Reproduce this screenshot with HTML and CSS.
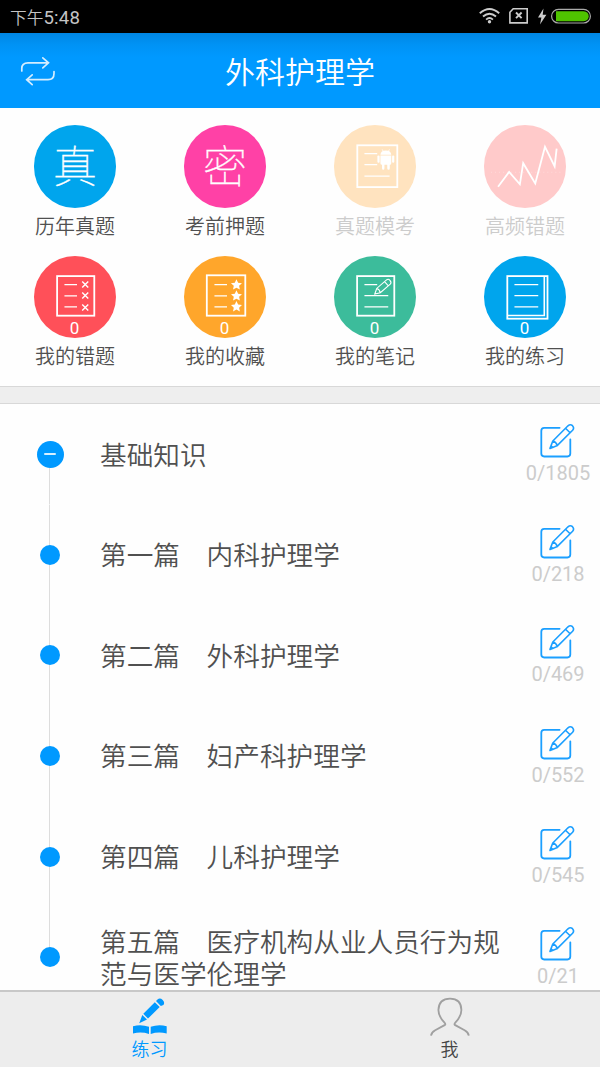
FILE: index.html
```
<!DOCTYPE html>
<html lang="zh-CN">
<head>
<meta charset="utf-8">
<title>外科护理学</title>
<link rel="stylesheet" href="styles.css">
</head>
<body>
<svg class="defs" width="0" height="0">
  <symbol id="edit" viewBox="0 0 36 36">
    <path d="M19.6 4.8H4.2Q1.3 4.8 1.3 7.7V30.6Q1.3 33.5 4.2 33.5H27.4Q30.3 33.5 30.3 30.6V16.3"/>
    <path d="M10 25.4L12.8 18L28 2.8Q30.3.7 32.5 2.7Q34.6 5 32.6 7.3L17.4 22.4ZM12.8 18Q15.8 18.7 17.4 22.4M25.5 5.3L30.1 9.8M11 22.8L12.8 24.4" stroke-width="1.6"/>
  </symbol>
  <symbol id="star" viewBox="-5 -5 10 10">
    <path d="M0-4.9L1.5-1.7L5-1.3L2.4 1.1L3.1 4.5L0 2.8L-3.1 4.5L-2.4 1.1L-5-1.3L-1.5-1.7Z"/>
  </symbol>
</svg>
<div class="screen">
  <div class="status">
    <span class="time">下午<span class="clock">5:48</span></span>
    <svg class="status-icons" viewBox="0 0 116 24" width="116" height="24">
      <g fill="none" stroke="#ccc" stroke-width="1.9">
        <path d="M.8 9.2Q10.5.6 20.2 9.2M4 12.5Q10.5 6.9 17 12.5M7.1 15.6Q10.5 12.6 13.9 15.6"/>
        <path d="M34.2 4.8H48.2V18.9H30.9V8.2Z" stroke-width="1.6"/>
        <path d="M37 8.5L42.6 14.2M42.6 8.5L37 14.2"/>
      </g>
      <circle cx="10.5" cy="17.8" r="1.7" fill="#ccc"/>
      <path d="M64.5 4.5L59 13.4H62.4L61 20.5L67.4 10.8H63.7Z" fill="#ccc"/>
      <rect x="72.6" y="5.4" width="38.8" height="13.6" rx="6.8" fill="none" stroke="#aaa" stroke-width="1.2"/>
      <path d="M77 7.2H104.5Q109.7 7.5 109.7 12.2Q109.7 16.9 104.5 17.2H77Z" fill="#4fc300"/>
    </svg>
  </div>
  <header class="header">
    <svg class="swap" viewBox="0 0 36 32" width="36" height="32">
      <path d="M1.8 15V12.5Q1.8 6.8 8 6.8H28.5M22.8 1.8L28.5 6.8L22.8 11.9M34 15.5V17.5Q34 23.7 28 23.7H7M12.2 18.8L6.7 23.7L12.2 28.7"/>
    </svg>
    <h1 class="title">外科护理学</h1>
  </header>

  <section class="grid">
    <div class="tile">
      <div class="disc blue"><span class="glyph">真</span></div>
      <span class="label">历年真题</span>
    </div>
    <div class="tile">
      <div class="disc pink"><span class="glyph">密</span></div>
      <span class="label">考前押题</span>
    </div>
    <div class="tile off">
      <div class="disc cream">
        <svg class="art" viewBox="0 0 82 82">
          <rect x="23.2" y="20.2" width="39.8" height="41.6"/>
          <path d="M30.3 28.5H43M30.3 39.5H43M30.3 50.8H55.3" stroke-width="1.3"/>
          <g fill="#fff" stroke="none">
            <path d="M46.2 29.6Q46.5 25.3 51.6 25.3Q56.7 25.3 57 29.6ZM46.2 30.3H57V38Q57 39.5 55.5 39.5V43Q55.5 44.5 54.3 44.5T53 43V39.5H50.2V43Q50.2 44.5 49 44.5T47.8 43V39.5Q46.2 39.5 46.2 38Z"/>
            <rect x="43.2" y="30.3" width="2.2" height="7.2" rx="1"/>
            <rect x="57.8" y="30.3" width="2.2" height="7.2" rx="1"/>
          </g>
          <path d="M48 24.3L49.2 26.5M55.2 24.3L54 26.5" stroke-width=".8"/>
        </svg>
      </div>
      <span class="label">真题模考</span>
    </div>
    <div class="tile off">
      <div class="disc rose">
        <svg class="art" viewBox="0 0 82 82">
          <path d="M7 47H76" stroke-width="1" stroke-dasharray="1 3" opacity=".3"/>
          <path d="M14 61.5L25 46.8L35.7 59L39 38L51 58.2L60.7 21.7L70.3 41.2L72.3 23.5"/>
        </svg>
      </div>
      <span class="label">高频错题</span>
    </div>
    <div class="tile">
      <div class="disc red">
        <svg class="art" viewBox="0 0 82 82">
          <rect x="23" y="20" width="37" height="39.4"/>
          <path d="M30.3 28.4H42.8M30.3 39.7H42.8M30.3 50.7H42.8" stroke-width="1.3"/>
          <path d="M48 25.4L54 31.4M54 25.4L48 31.4M48 36.4L54 42.4M54 36.4L48 42.4M48 48.2L54 54.2M54 48.2L48 54.2" stroke-width="1.4"/>
        </svg>
        <span class="num">0</span>
      </div>
      <span class="label">我的错题</span>
    </div>
    <div class="tile">
      <div class="disc orange">
        <svg class="art" viewBox="0 0 82 82">
          <rect x="22.7" y="19.2" width="38.3" height="40.2"/>
          <path d="M30.3 28.4H42.8M30.3 39.7H42.8M30.3 50.7H42.8" stroke-width="1.3"/>
          <g fill="#fff" stroke="none">
            <use href="#star" x="46.7" y="23" width="11" height="11"/>
            <use href="#star" x="46.7" y="33.9" width="11" height="11"/>
            <use href="#star" x="46.7" y="44.7" width="11" height="11"/>
          </g>
        </svg>
        <span class="num">0</span>
      </div>
      <span class="label">我的收藏</span>
    </div>
    <div class="tile">
      <div class="disc green">
        <svg class="art" viewBox="0 0 82 82">
          <rect x="23" y="20" width="37" height="39.4"/>
          <path d="M30.3 28.4H43M30.3 39.5H54M30.3 50.7H54" stroke-width="1.3"/>
          <path class="note-pen" d="M40.6 37.8L42.5 32.3L52.3 23.8Q54 22.3 55.7 24.2Q57.6 26.4 56 28L46.1 36.6ZM42.5 32.3Q45.3 33 46.1 36.6M50.3 25.5L54.1 29.7"/>
        </svg>
        <span class="num">0</span>
      </div>
      <span class="label">我的笔记</span>
    </div>
    <div class="tile">
      <div class="disc blue">
        <svg class="art" viewBox="0 0 82 82">
          <rect x="23.2" y="20" width="40" height="42.4"/>
          <path d="M60 20V59.2H23.2" stroke-width="1.6"/>
          <path d="M30.3 28.4H54M30.3 39.5H54M30.3 50.7H54" stroke-width="1.3"/>
        </svg>
        <span class="num">0</span>
      </div>
      <span class="label">我的练习</span>
    </div>
  </section>

  <div class="gap"></div>

  <main class="list">
    <div class="row first"><div class="rail"><span class="dot minus"></span></div><span class="name">基础知识</span><div class="stat"><svg class="edit"><use href="#edit"/></svg><span class="count">0/1805</span></div></div>
    <div class="row"><div class="rail"><span class="dot"></span></div><span class="name">第一篇　内科护理学</span><div class="stat"><svg class="edit"><use href="#edit"/></svg><span class="count">0/218</span></div></div>
    <div class="row"><div class="rail"><span class="dot"></span></div><span class="name">第二篇　外科护理学</span><div class="stat"><svg class="edit"><use href="#edit"/></svg><span class="count">0/469</span></div></div>
    <div class="row"><div class="rail"><span class="dot"></span></div><span class="name">第三篇　妇产科护理学</span><div class="stat"><svg class="edit"><use href="#edit"/></svg><span class="count">0/552</span></div></div>
    <div class="row"><div class="rail"><span class="dot"></span></div><span class="name">第四篇　儿科护理学</span><div class="stat"><svg class="edit"><use href="#edit"/></svg><span class="count">0/545</span></div></div>
    <div class="row last"><div class="rail"><span class="dot"></span></div><span class="name">第五篇　医疗机构从业人员行为规范与医学伦理学</span><div class="stat"><svg class="edit"><use href="#edit"/></svg><span class="count">0/21</span></div></div>
  </main>

  <nav class="nav">
    <div class="tab active">
      <svg viewBox="0 0 40 40" width="40" height="40">
        <g fill="#0099ff">
          <path d="M9.2 31.3L12.3 23L17 27.5ZM13.3 21.8L24.8 10.2L29.7 15L18 26.6ZM26 9L27.5 7.4Q30 5.4 32.7 8Q35.2 10.6 33.4 13L30.8 14Z"/>
          <path d="M3 34.2Q11 31.8 19 34.8V42Q11 39.4 3 41.6ZM20.7 34.8Q28.5 31.8 36.7 34.2V41.6Q28.5 39.4 20.7 42Z"/>
        </g>
      </svg>
      <span>练习</span>
    </div>
    <div class="tab">
      <svg viewBox="0 0 40 40" width="40" height="40">
        <path d="M1 43.6Q1.2 40.6 5.2 38.2L15 32.9Q15.8 32.2 14.5 30.7Q8.4 24.2 8.4 18Q8.8 6.6 20 6.6T31.4 18Q31.4 24.2 25.3 30.7Q24 32.2 24.8 32.9L34.6 38.2Q38.6 40.6 38.8 43.6" fill="none" stroke="#a0a0a0" stroke-width="1.8"/>
      </svg>
      <span>我</span>
    </div>
  </nav>
</div>
</body>
</html>
```

FILE: styles.css
```
* { box-sizing: border-box; }
body {
  margin: 0;
  font-family: Roboto, "Noto Sans CJK SC", sans-serif;
  color: #555;
  background: #fefefe;
}
.defs { position: absolute; }
.screen {
  width: 600px;
  height: 1067px;
  display: flex;
  flex-direction: column;
  overflow: hidden;
}
.status {
  flex: none;
  height: 33px;
  padding: 0 5px 0 10px;
  display: flex;
  align-items: center;
  justify-content: space-between;
  background: #000;
}
.time {
  padding-top: 2px;
  font: 350 16.7px/33px "Noto Sans CJK SC", sans-serif;
  color: #c4c4c4;
}
.clock { font: 400 18.6px/30px Roboto, sans-serif; letter-spacing: .2px; }
.status-icons { margin-top: -1px; }
.header {
  flex: none;
  height: 75px;
  padding: 0 20px;
  display: grid;
  grid-template-columns: 36px 1fr 36px;
  align-items: center;
  background: linear-gradient(#0086e3 0, #0093f5 12px, #0099ff 24px);
}
.swap { margin-top: 2px; fill: none; stroke: #d4edff; stroke-width: 1.7; stroke-linecap: round; }
.title {
  margin: 0;
  padding-bottom: 2px;
  text-align: center;
  font: 350 30px/40px "Noto Sans CJK SC", sans-serif;
  color: #fff;
}
.grid {
  flex: none;
  height: 278px;
  padding-top: 17.4px;
  display: grid;
  grid-template-columns: repeat(4, 150px);
  grid-auto-rows: 130.6px;
}
.tile { display: flex; flex-direction: column; align-items: center; }
.disc {
  width: 82.4px;
  height: 82.4px;
  border-radius: 50%;
  display: grid;
  justify-items: center;
}
.disc > * { grid-area: 1 / 1; }
.blue { background: #00a5ed; }
.pink { background: #ff41a6; }
.cream { background: #ffe3bf; }
.rose { background: #ffcaca; }
.red { background: #ff5059; }
.orange { background: #ffa62b; }
.green { background: #3cbc9b; }
.glyph {
  font: 100 44px/79px "Noto Sans CJK SC", sans-serif;
  color: #fff;
  -webkit-text-stroke: .3px #fff;
}
.art { width: 82.4px; height: 82.4px; fill: none; stroke: #fff; stroke-width: 1.8; }
.note-pen { fill: #3cbc9b; stroke-width: 1.1; }
.num { align-self: end; padding-right: 1px; font: 400 17px/20px Roboto, sans-serif; color: #fff; }
.label {
  margin-top: 4px;
  font: 350 20px/28px "Noto Sans CJK SC", sans-serif;
  color: #505050;
}
.off .label { color: #ccc; }
.gap {
  flex: none;
  height: 18px;
  background: #eee;
  border-top: 1px solid #d8d8d8;
  border-bottom: 1px solid #d8d8d8;
}
.list { flex: 1; min-height: 0; overflow: hidden; }
.row {
  height: 100.6px;
  display: grid;
  grid-template-columns: 100px 416px 84px;
  align-items: center;
}
.rail {
  height: 100%;
  display: grid;
  place-items: center;
  background: linear-gradient(#ddd, #ddd) 49px 0 / 1px 100% no-repeat;
}
.first .rail { background-position: 49px 100%; background-size: 1px 50%; }
.last .rail { background-size: 1px 50%; }
.dot { width: 20px; height: 20px; border-radius: 50%; background: #0099ff; }
.minus { width: 27px; height: 27px; display: grid; place-items: center; }
.minus::after { content: ""; width: 12px; height: 2px; border-radius: 1px; background: #d9f0ff; }
.name {
  width: 402px;
  padding-bottom: 1.6px;
  font: 350 26.67px/32px "Noto Sans CJK SC", sans-serif;
  color: #505050;
}
.last .name { padding-bottom: .6px; }
.stat {
  height: 100%;
  padding-top: 19px;
  display: flex;
  flex-direction: column;
  align-items: center;
}
.edit { width: 36px; height: 36px; margin-right: 1px; fill: none; stroke: #1b9fff; stroke-width: 1.8; stroke-linejoin: round; stroke-linecap: round; }
.count { margin-top: 2px; font: 400 20px/24px Roboto, sans-serif; color: #ccc; }
.nav {
  flex: none;
  height: 77px;
  display: grid;
  grid-template-columns: 1fr 1fr;
  background: #ededed;
  border-top: 2px solid #c8c8c8;
}
.tab {
  display: flex;
  flex-direction: column;
  align-items: center;
  font: 350 18px/26px "Noto Sans CJK SC", sans-serif;
  color: #444;
}
.tab svg { overflow: visible; margin-bottom: 3px; }
.tab span { padding-right: 1px; }
.active { color: #0099ff; }
```
